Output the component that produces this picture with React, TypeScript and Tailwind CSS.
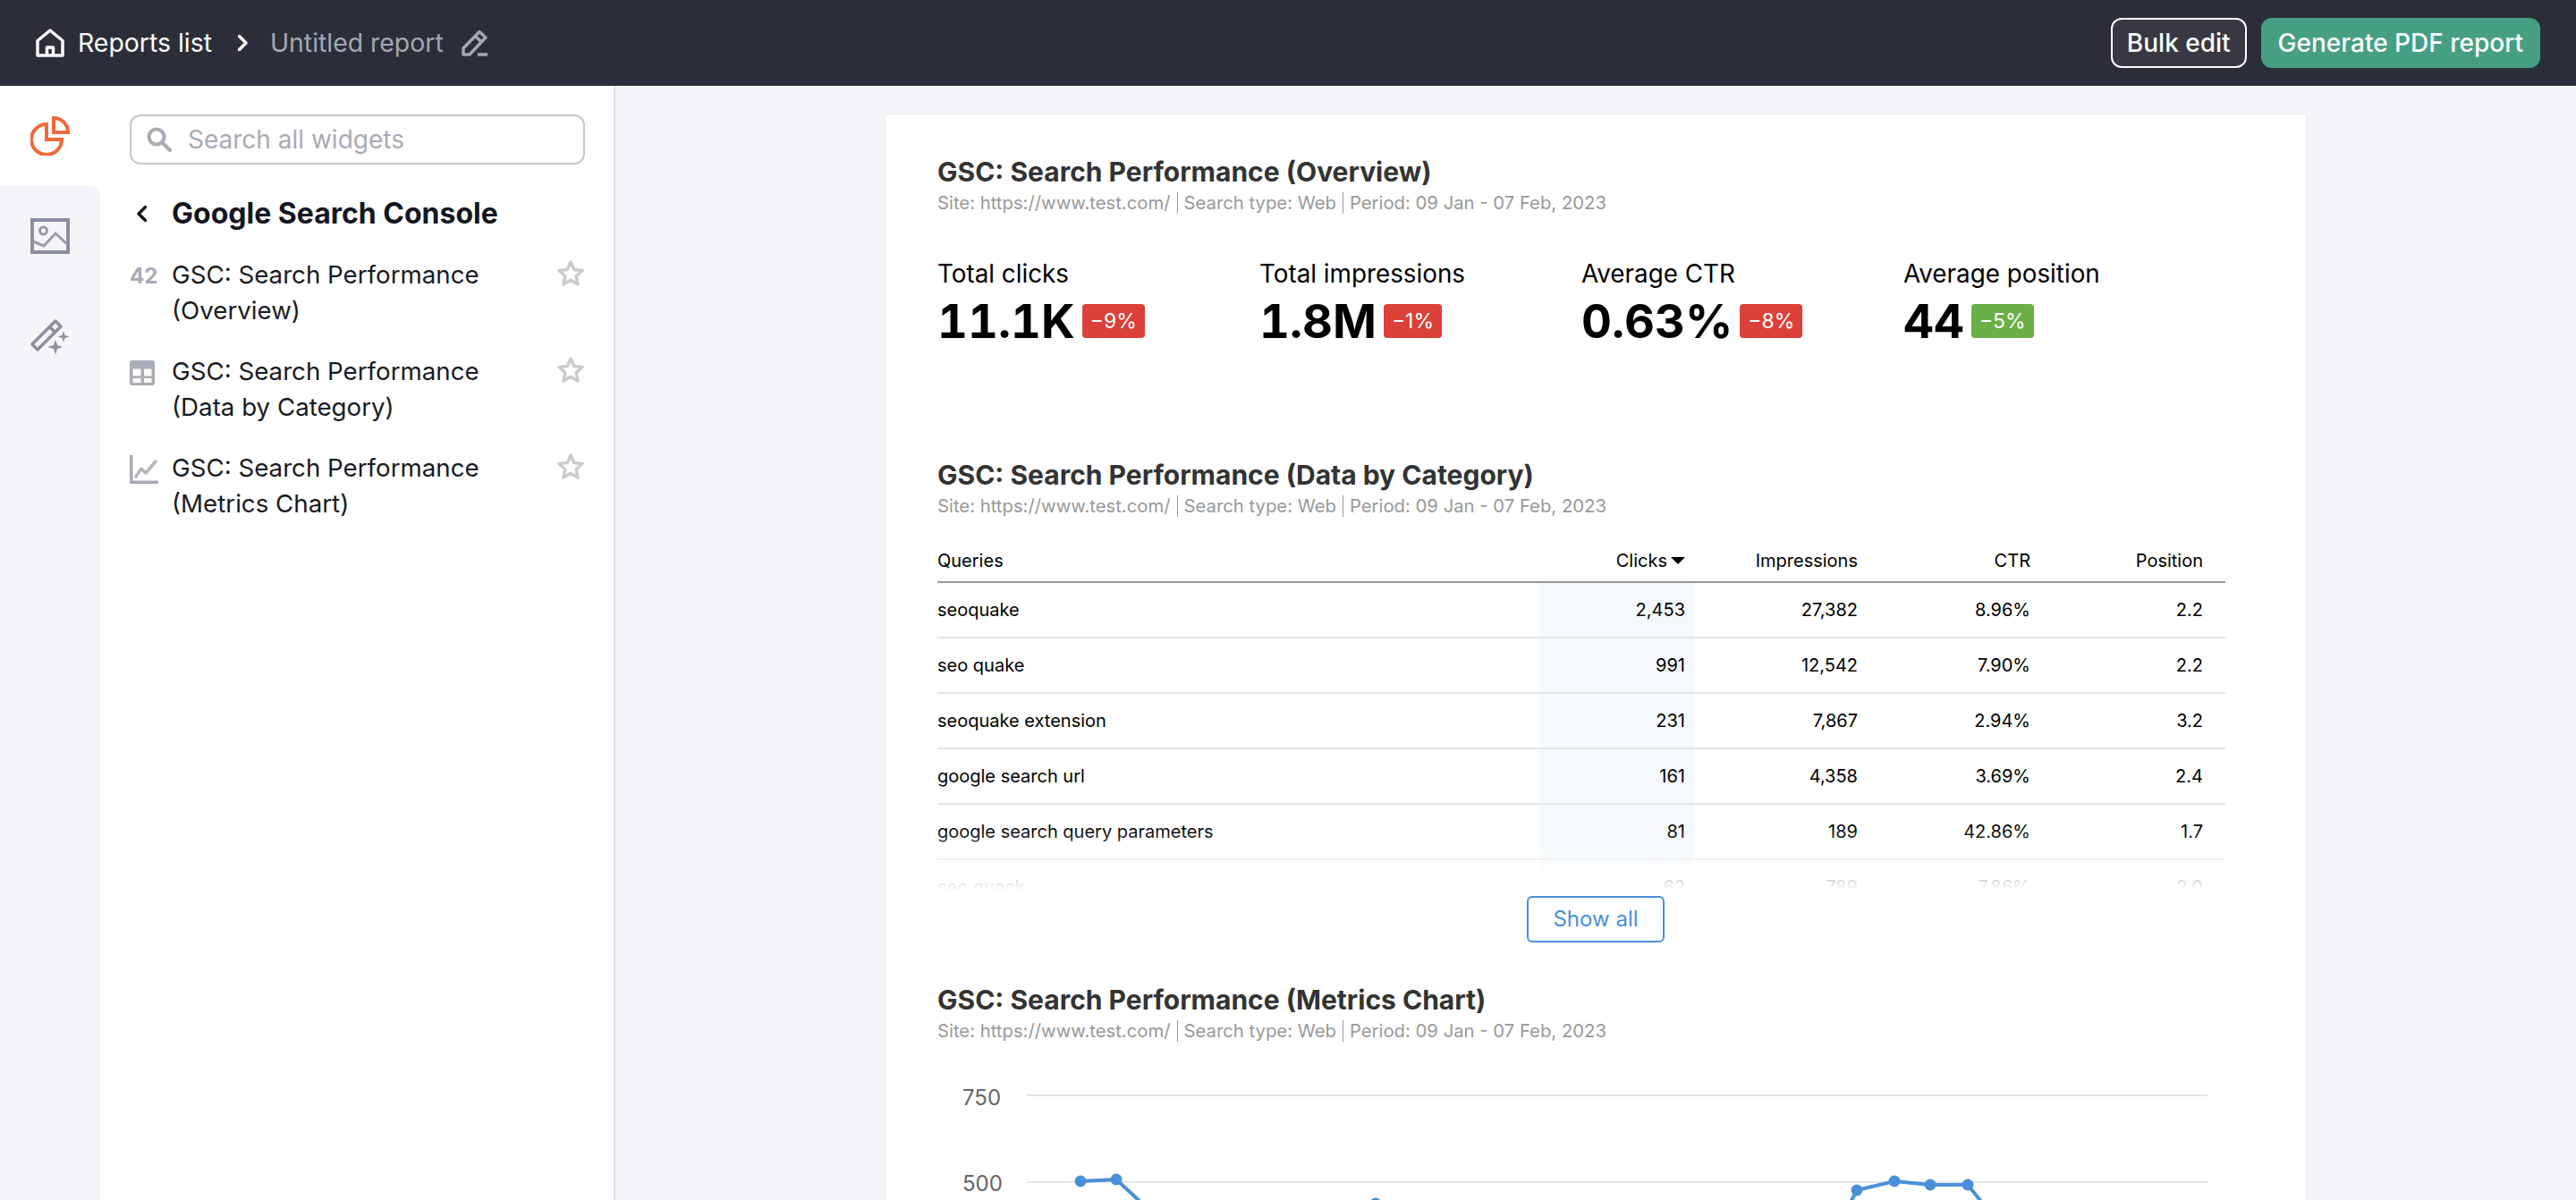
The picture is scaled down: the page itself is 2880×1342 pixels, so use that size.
const SITE_LINE = [
  "Site: https://www.test.com/",
  "Search type: Web",
  "Period: 09 Jan - 07 Feb, 2023",
];

const STATS = [
  { label: "Total clicks", value: "11.1K", delta: "−9%", good: false },
  { label: "Total impressions", value: "1.8M", delta: "−1%", good: false },
  { label: "Average CTR", value: "0.63%", delta: "−8%", good: false },
  { label: "Average position", value: "44", delta: "−5%", good: true },
];

const ROWS = [
  ["seoquake", "2,453", "27,382", "8.96%", "2.2"],
  ["seo quake", "991", "12,542", "7.90%", "2.2"],
  ["seoquake extension", "231", "7,867", "2.94%", "3.2"],
  ["google search url", "161", "4,358", "3.69%", "2.4"],
  ["google search query parameters", "81", "189", "42.86%", "1.7"],
  ["seo quack", "62", "789", "7.86%", "2.0"],
];

function HomeIcon() {
  return (
    <svg width="32" height="32" viewBox="0 0 32 32" fill="none" stroke="#fff" strokeWidth="3.5" strokeLinejoin="round">
      <path d="M2 13.500 16 2l14 11.500V30H2z" />
      <path d="M12.500 30v-9h7v9" />
    </svg>
  );
}

function PencilIcon() {
  return (
    <svg width="30" height="30" viewBox="0 0 30 30" fill="none" stroke="#a5a7b2" strokeWidth="3.5" strokeLinejoin="round">
      <path d="M2 28v-7L20 2.500l7 6.500L9 28z" />
      <path d="M15.500 7.500l7 6.500" />
      <path d="M18 28h11" strokeWidth="3.500" />
    </svg>
  );
}

function PieIcon() {
  return (
    <svg width="44" height="44" viewBox="0 0 44 44" fill="none" stroke="#f0693a" strokeWidth="4">
      <path d="M18 9A17 17 0 1 0 35 26H18z" />
      <path d="M26 2a16 16 0 0 1 16 16H26z" />
    </svg>
  );
}

function ImageIcon() {
  return (
    <svg width="44" height="40" viewBox="0 0 44 40" fill="none">
      <rect x="2" y="2" width="40" height="36" stroke="#8d8f9e" strokeWidth="4" />
      <circle cx="14.500" cy="14" r="4" stroke="#9a9cab" strokeWidth="3" />
      <path d="M3 26l12 5 13-14 13 12" stroke="#9a9cab" strokeWidth="3" />
    </svg>
  );
}

function WandIcon() {
  return (
    <svg width="44" height="44" viewBox="0 0 44 44" fill="none">
      <path d="M2 29 28 3l6 6L8 35z" stroke="#8d8f9e" strokeWidth="3.500" strokeLinejoin="round" />
      <path d="M21 9l7 7" stroke="#8d8f9e" strokeWidth="3.500" />
      <path
        d="M28 24l2 6 6 2-6 2-2 7-2-7-7-2 7-2zM37 14l1.500 5 5 1.500-5 1.500-1.500 5-1.500-5-5-1.500 5-1.500z"
        fill="#8d8f9e"
      />
    </svg>
  );
}

function TableIcon() {
  return (
    <svg width="28" height="28" viewBox="0 0 28 28">
      <rect width="28" height="28" rx="3" fill="#a9abb6" />
      <path d="M3.500 9.500h9v8h-9zM16 9.500h8.500v8H16zM3.500 20h9v5h-9zM16 20h8.500v5H16z" fill="#fff" />
    </svg>
  );
}

function LineIcon() {
  return (
    <svg width="32" height="32" viewBox="0 0 32 32" fill="none">
      <path d="M1.750 0v30.250H32" stroke="#a9abb6" strokeWidth="3.500" />
      <path d="M7 24l6-9 5 5 11-13" stroke="#b5b7c0" strokeWidth="3.500" strokeLinecap="round" strokeLinejoin="round" />
    </svg>
  );
}

function SearchIcon() {
  return (
    <svg width="28" height="28" viewBox="0 0 28 28" fill="none" stroke="#a9abb6" strokeWidth="4" strokeLinecap="round">
      <circle cx="11" cy="11" r="8.500" />
      <path d="M17.500 17.500 26 26" />
    </svg>
  );
}

function StarIcon() {
  return (
    <svg className="mt-[2px] shrink-0" width="32" height="32" viewBox="0 0 32 32" fill="none" stroke="#cccccc" strokeWidth="3.500" strokeLinejoin="round">
      <path d="m16 4 3.800 8.500 9.200 1-6.800 6.300 1.900 9.200-8.100-4.700L7.900 29l1.900-9.200L3 13.500l9.200-1z" />
    </svg>
  );
}

function Chevron({ left, className }: { left?: boolean; className: string }) {
  return (
    <svg className={className} width="13" height="20" viewBox="0 0 13 20" fill="none" stroke="currentColor" strokeWidth="3.500" strokeLinecap="round" strokeLinejoin="round">
      <path d={left ? "M10.500 2.500 3 10l7.500 7.500" : "M2.500 2.500 10 10l-7.500 7.500"} />
    </svg>
  );
}

function WidgetItem({ icon, title, sub }: { icon: React.ReactNode; title: string; sub: string }) {
  return (
    <div className="flex">
      <div className="mt-[2px] flex h-10 w-[47px] shrink-0 items-center">{icon}</div>
      <div className="flex-1 text-[27.7px] leading-10 text-[#191b23]">
        {title}
        <br />
        {sub}
      </div>
      <StarIcon />
    </div>
  );
}

function WidgetHead({ title }: { title: string }) {
  return (
    <div>
      <h2 className="text-[30px] leading-10 font-bold text-[#333333]">{title}</h2>
      <p className="flex h-[30px] items-center text-[20.3px] leading-[30px] text-[#999999]">
        {SITE_LINE[0]}
        <span className="mx-[7px] h-6 w-px bg-[#999999]" />
        {SITE_LINE[1]}
        <span className="mx-[7px] h-6 w-px bg-[#999999]" />
        {SITE_LINE[2]}
      </p>
    </div>
  );
}

function Chart() {
  const pts = [
    [1208, 1321], [1248, 1319], [1290, 1358],
  ];
  const mid = [[1538, 1346]];
  const right = [
    [2060, 1362], [2076, 1331], [2118, 1321], [2158, 1325], [2200, 1325], [2240, 1375],
  ];
  const toY = (y: number) => y - 1210;
  const toX = (x: number) => x - 1048;
  const line = (list: number[][]) => list.map((p) => `${toX(p[0])},${toY(p[1])}`).join(" ");
  return (
    <svg width="1440" height="132" viewBox="0 0 1440 132" className="mt-[42px] block">
      <text x="28" y="26" fontSize="24" fill="#666666" fontFamily="Inter, sans-serif">750</text>
      <text x="28" y="122" fontSize="24" fill="#666666" fontFamily="Inter, sans-serif">500</text>
      <path d="M100 15h1320M100 112h1320" stroke="#e6e6e6" strokeWidth="2" />
      <polyline points={line(pts)} fill="none" stroke="#4a90d9" strokeWidth="4" />
      <polyline points={line(right)} fill="none" stroke="#4a90d9" strokeWidth="4" />
      {[...pts, ...mid, ...right.slice(1, 5)].map((p) => (
        <circle key={p[0]} cx={toX(p[0])} cy={toY(p[1])} r="6.500" fill="#4a90d9" />
      ))}
    </svg>
  );
}

export default function App() {
  return (
    <div className="flex h-[1342px] flex-col overflow-hidden bg-[#f4f5f9] [font-family:Inter,sans-serif]">
      <header className="flex h-24 shrink-0 items-center bg-[#2b2e38] pr-10 pl-10">
        <HomeIcon />
        <span className="ml-[15px] text-[28.4px] text-white">Reports list</span>
        <Chevron className="ml-7 text-white" />
        <span className="ml-6 text-[28.4px] text-[#a5a7b2]">Untitled report</span>
        <span className="ml-5">
          <PencilIcon />
        </span>
        <div className="ml-auto flex gap-4">
          <button className="h-14 rounded-xl border-2 border-white bg-[#383842] px-[16px] text-[28px] font-medium text-white">
            Bulk edit
          </button>
          <button className="h-14 rounded-xl bg-[#469f82] px-[19px] text-[28px] font-medium text-white">
            Generate PDF report
          </button>
        </div>
      </header>

      <div className="flex min-h-0 flex-1">
        <aside className="flex w-[688px] shrink-0 border-r-2 border-[#e0e1e9] bg-white">
          <nav className="flex w-28 shrink-0 flex-col">
            <div className="flex h-28 items-start justify-center pt-[34px]">
              <PieIcon />
            </div>
            <div className="flex flex-1 flex-col items-center rounded-tr-xl bg-[#f4f5f9] pt-9">
              <ImageIcon />
              <div className="mt-[72px]">
                <WandIcon />
              </div>
            </div>
          </nav>
          <div className="flex-1 pt-8 pr-8 pl-[33px]">
            <div className="flex h-14 items-center rounded-xl border-2 border-[#c4c7cf] pl-[17px]">
              <SearchIcon />
              <span className="ml-[18px] text-[28px] text-[#a9abb6]">Search all widgets</span>
            </div>
            <div className="mt-[35px] flex h-10 items-center pl-[7px]">
              <Chevron left className="text-[#14161f]" />
              <h1 className="ml-[27px] text-[32px] font-bold text-[#14161f]">Google Search Console</h1>
            </div>
            <div className="mt-7 flex flex-col gap-7">
              <WidgetItem
                icon={<span className="text-[24px] font-bold text-[#a9abb6]">42</span>}
                title="GSC: Search Performance"
                sub="(Overview)"
              />
              <WidgetItem icon={<TableIcon />} title="GSC: Search Performance" sub="(Data by Category)" />
              <WidgetItem icon={<LineIcon />} title="GSC: Search Performance" sub="(Metrics Chart)" />
            </div>
          </div>
        </aside>

        <main className="min-w-0 flex-1 overflow-hidden pt-8">
          <div className="mx-auto h-[1400px] w-[1588px] rounded-sm bg-white px-[58px] pt-11 shadow-[0_0_2px_rgba(0,0,0,0.12)]">
            <WidgetHead title="GSC: Search Performance (Overview)" />
            <div className="mt-11 grid grid-cols-[repeat(4,360px)]">
              {STATS.map((s) => (
                <div key={s.label}>
                  <div className="text-[27.8px] leading-10 text-black">{s.label}</div>
                  <div className="flex items-center">
                    <span className="text-[52.5px] leading-[66px] font-bold tabular-nums text-black">{s.value}</span>
                    <span
                      className={`ml-2 flex h-[38px] items-center rounded px-[9px] text-[23px] text-white ${
                        s.good ? "bg-[#6aaf47]" : "bg-[#dc4139]"
                      }`}
                    >
                      {s.delta}
                    </span>
                  </div>
                </div>
              ))}
            </div>

            <div className="mt-[119px]">
              <WidgetHead title="GSC: Search Performance (Data by Category)" />
            </div>

            <div className="relative mt-[23px] h-[392px] w-[1440px] overflow-hidden">
              <table className="w-full table-fixed border-collapse text-[20px] text-black">
                <thead>
                  <tr className="h-[47px] border-b-2 border-[#999999]">
                    <th className="w-[674px] text-left font-normal">Queries</th>
                    <th className="w-[172px] pr-[10px] text-right font-normal">
                      Clicks
                      <span className="ml-1 inline-block border-x-[8px] border-t-[8px] border-x-transparent border-t-black align-[3px]" />
                    </th>
                    <th className="w-[183px] text-right font-normal">Impressions</th>
                    <th className="w-[193px] text-right font-normal">CTR</th>
                    <th className="pr-[25px] text-right font-normal">Position</th>
                  </tr>
                </thead>
                <tbody>
                  {ROWS.map((r) => (
                    <tr key={r[0]} className="h-[62px] border-b-2 border-[#e1e4e8]">
                      <td>{r[0]}</td>
                      <td className="bg-[#f4f9fd] pr-[10px] text-right">{r[1]}</td>
                      <td className="text-right">{r[2]}</td>
                      <td className="text-right">{r[3]}</td>
                      <td className="pr-[25px] text-right">{r[4]}</td>
                    </tr>
                  ))}
                </tbody>
              </table>
              <div className="absolute inset-x-0 bottom-0 h-[70px] bg-gradient-to-b from-white/0 to-white" />
            </div>

            <div className="mt-[6px] flex justify-center">
              <button className="h-[52px] w-[154px] rounded-md border-2 border-[#4a90d9] text-[24px] text-[#4a90d9]">
                Show all
              </button>
            </div>

            <div className="mt-11">
              <WidgetHead title="GSC: Search Performance (Metrics Chart)" />
            </div>
            <Chart />
          </div>
        </main>
      </div>
    </div>
  );
}
